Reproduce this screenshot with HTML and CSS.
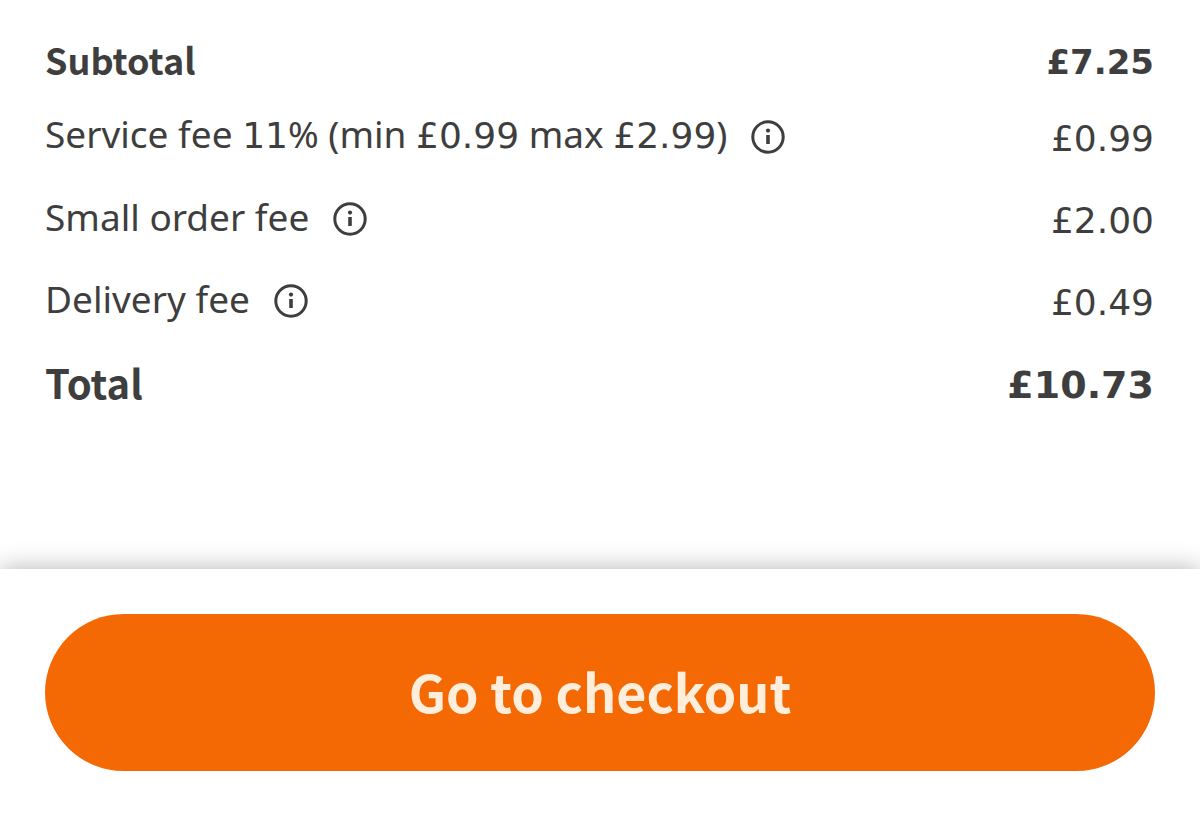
FILE: index.html
```html
<!DOCTYPE html>
<html lang="en">
<head>
<meta charset="utf-8">
<meta name="viewport" content="width=device-width, initial-scale=1">
<title>Basket</title>
<link rel="stylesheet" href="styles.css">
</head>
<body>
<main class="basket">
  <dl class="summary">
    <div class="row row-subtotal"><dt>Subtotal</dt><dd>£7.25</dd></div>
    <div class="row row-fee">
      <dt><span class="label">Service fee <span class="num">11</span>% (min <span class="num">£0.99</span> max <span class="num">£2.99</span>)</span>
        <button class="info" type="button" aria-label="About the service fee"><svg viewBox="0 0 34 34"><circle cx="17" cy="17" r="15.2" fill="none" stroke="currentColor" stroke-width="3"/><circle cx="17" cy="10.6" r="2.1" fill="currentColor"/><path d="M15.2 15H18.8V24H15.2Z" fill="currentColor"/></svg></button>
      </dt><dd>£0.99</dd>
    </div>
    <div class="row row-fee">
      <dt><span class="label">Small order fee</span>
        <button class="info" type="button" aria-label="About the small order fee"><svg viewBox="0 0 34 34"><circle cx="17" cy="17" r="15.2" fill="none" stroke="currentColor" stroke-width="3"/><circle cx="17" cy="10.6" r="2.1" fill="currentColor"/><path d="M15.2 15H18.8V24H15.2Z" fill="currentColor"/></svg></button>
      </dt><dd>£2.00</dd>
    </div>
    <div class="row row-fee">
      <dt><span class="label">Delivery fee</span>
        <button class="info" type="button" aria-label="About the delivery fee"><svg viewBox="0 0 34 34"><circle cx="17" cy="17" r="15.2" fill="none" stroke="currentColor" stroke-width="3"/><circle cx="17" cy="10.6" r="2.1" fill="currentColor"/><path d="M15.2 15H18.8V24H15.2Z" fill="currentColor"/></svg></button>
      </dt><dd>£0.49</dd>
    </div>
    <div class="row row-total"><dt>Total</dt><dd>£10.73</dd></div>
  </dl>
  <footer class="actions"><button class="checkout" type="button">Go to checkout</button></footer>
</main>
</body>
</html>
```
FILE: styles.css
```css
* { box-sizing: border-box; }
body {
  margin: 0;
  background: #fff;
  color: #3e3e3e;
  font-family: "Noto Sans CJK SC", "Noto Sans", sans-serif;
}
.basket {
  display: flex;
  flex-direction: column;
  min-height: 100vh;
}
.summary {
  flex: 1;
  margin: 0;
  padding: 35px 46px 0 45px;
}
.row {
  display: flex;
  justify-content: space-between;
  align-items: center;
}
.row dt {
  display: flex;
  align-items: center;
  gap: 24px;
}
.row dd {
  margin: 0;
  font-family: "DejaVu Sans", sans-serif;
}
.row-subtotal {
  height: 60px;
  padding-bottom: 12px;
  font-size: 36px;
  font-weight: 700;
}
.row-subtotal dd {
  padding-top: 6px;
  font-size: 34px;
}
.row-fee {
  height: 82px;
  padding-top: 1px;
  font-size: 37px;
}
.label {
  padding-bottom: 4px;
  font-family: "Noto Sans", sans-serif;
  line-height: 54px;
}
.num {
  font-family: "DejaVu Sans", sans-serif;
  font-size: 36px;
}
.row-fee dd {
  padding-top: 4px;
  font-size: 36px;
}
.row-total {
  height: 82px;
  font-size: 40px;
  font-weight: 700;
}
.row-total dd {
  padding-top: 6px;
  font-size: 38px;
}
.info {
  width: 34px;
  height: 34px;
  padding: 0;
  border: 0;
  background: none;
  color: inherit;
}
.info svg { display: block; }
.actions {
  padding: 45px;
  background: #fff;
  box-shadow: 0 0 24px rgba(0, 0, 0, 0.3);
}
.checkout {
  display: block;
  width: 100%;
  height: 157px;
  padding: 0 0 4px;
  border: 0;
  border-radius: 79px;
  background: #f56905;
  color: #ffeedb;
  font: 700 52px "Noto Sans CJK SC", "Noto Sans", sans-serif;
}
```
